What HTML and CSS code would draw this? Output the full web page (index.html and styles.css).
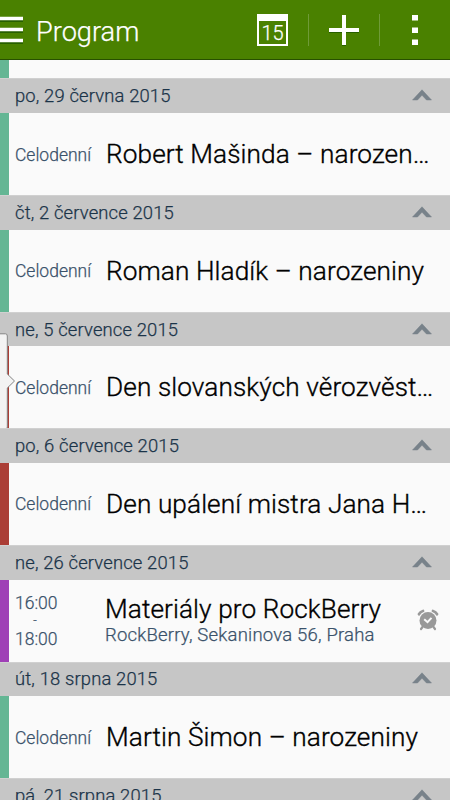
FILE: index.html
```html
<!DOCTYPE html>
<html lang="cs">
<head>
<meta charset="utf-8">
<title>Program</title>
<link rel="stylesheet" href="styles.css">
</head>
<body>
<svg class="defs" width="0" height="0"><symbol id="up" viewBox="0 0 20 12"><path d="M.5 11 10 .8 19.500 11h-5L10 6.200 5.500 11z" fill="#78828a" stroke="#78828a" stroke-width=".5"/></symbol></svg>
<main class="app">
<header class="bar">
  <svg class="menu" width="24" height="28" viewBox="0 0 24 28"><path d="M0 3h23M0 14h23M0 25h23" transform="translate(0 1)" stroke="#286000" stroke-width="4"/><path d="M0 2.500h23M0 13.500h23M0 24.500h23" stroke="#fff" stroke-width="3.500"/></svg>
  <h1 class="title">Program</h1>
  <div class="today"><span>15</span></div>
  <i class="divider"></i>
  <svg class="plus" width="32" height="32" viewBox="0 0 32 32"><path d="M1 17h30M16 2v30" stroke="#286000" stroke-width="4"/><path d="M1 16h30M16 1v30" stroke="#fff" stroke-width="4"/></svg>
  <i class="divider"></i>
  <svg class="more" width="8" height="32" viewBox="0 0 8 32"><path d="M1 1h6v5.500H1zM1 13.500h6V19H1zM1 25.500h6V31H1z" fill="#fff"/></svg>
</header>
<div class="sliver green"></div>
<section>
  <h2 class="date"><span>po, 29 června 2015</span><svg class="up"><use href="#up"/></svg></h2>
  <div class="event green"><span class="time">Celodenní</span><span class="name">Robert Mašinda – narozeniny</span></div>
</section>
<section>
  <h2 class="date"><span>čt, 2 července 2015</span><svg class="up"><use href="#up"/></svg></h2>
  <div class="event green"><span class="time">Celodenní</span><span class="name">Roman Hladík – narozeniny</span></div>
</section>
<section>
  <h2 class="date"><span>ne, 5 července 2015</span><svg class="up"><use href="#up"/></svg></h2>
  <div class="event red"><span class="time">Celodenní</span><span class="name">Den slovanských věrozvěstů Cyrila a Metoděje</span></div>
  <svg class="handle" width="16" height="98" viewBox="0 0 16 98"><path d="M-1 .8H5.500Q7.300 .8 7.300 3V41L14.500 48 7.300 55V94Q7.300 96.500 5 96.500H-1z" fill="#f3f3f3" stroke="#858585"/></svg>
</section>
<section>
  <h2 class="date"><span>po, 6 července 2015</span><svg class="up"><use href="#up"/></svg></h2>
  <div class="event red"><span class="time">Celodenní</span><span class="name">Den upálení mistra Jana Husa</span></div>
</section>
<section>
  <h2 class="date"><span>ne, 26 července 2015</span><svg class="up"><use href="#up"/></svg></h2>
  <div class="event purple">
    <div class="time range"><span>16:00</span><i>-</i><span>18:00</span></div>
    <div class="details"><span class="name">Materiály pro RockBerry</span><span class="place">RockBerry, Sekaninova 56, Praha</span></div>
    <svg class="alarm" width="22" height="22" viewBox="0 0 22 22"><g fill="none" stroke="#999" stroke-linecap="round"><path d="M2 5.200Q3.200 2.700 6 2M20 5.200Q18.800 2.700 16 2" stroke-width="2.800"/><path d="M5.500 18 4 20M16.500 18 18 20" stroke-width="2.200"/></g><circle cx="11" cy="11.500" r="8.500" fill="#999"/><path d="M7.200 10.200 10.500 13.200 14.500 8.800" fill="none" stroke="#fafafa" stroke-width="2"/></svg>
  </div>
</section>
<section>
  <h2 class="date"><span>út, 18 srpna 2015</span><svg class="up"><use href="#up"/></svg></h2>
  <div class="event green"><span class="time">Celodenní</span><span class="name">Martin Šimon – narozeniny</span></div>
</section>
<section>
  <h2 class="date"><span>pá, 21 srpna 2015</span><svg class="up"><use href="#up"/></svg></h2>
</section>
</main>
</body>
</html>
```
FILE: styles.css
```css
* { box-sizing: border-box; }
body { margin: 0; font-family: Roboto, sans-serif; font-weight: 300; background: #fafafa; -webkit-text-stroke: .25px; }
.defs { position: absolute; }
.app { width: 450px; height: 800px; overflow: hidden; }
.bar { display: flex; align-items: center; height: 60px; background: #4a8100; border-bottom: 1px solid #285000; color: #fff; }
.menu { margin-right: 12px; }
.title { margin: 4px 0 0; width: 221px; font-size: 27.200px; font-weight: 300; line-height: 34px; }
.today { width: 31px; height: 32px; border: 2px solid #fff; border-top-width: 7px; text-align: center; font-size: 20px; line-height: 24px; }
.divider { width: 1px; height: 32px; margin-left: 20px; background: #6f9b38; }
.plus { margin-left: 19px; }
.plus + .divider { margin-left: 19px; }
.more { margin-left: 31px; }
.sliver { height: 18.3px; }
section { position: relative; }
.date { display: flex; align-items: center; justify-content: space-between; height: 34.800px; margin: 0; padding: 0 18px 0 15px; border-top: 1px solid #d0d0d0; background: #c6c6c6; color: #1b3449; font-size: 18.400px; font-weight: 300; letter-spacing: .15px; line-height: 24px; }
.up { width: 20px; height: 12px; margin-top: -2px; }
.event { display: flex; align-items: center; height: 81.860px; padding: 0 16px 0 6px; }
.green { border-left: 9px solid #64b694; }
.red { border-left: 9px solid #ab3e36; }
.purple { border-left: 9px solid #9f3fb6; }
.time { flex: none; width: 91px; padding-top: 1px; color: #3a526a; font-size: 17.500px; }
.name { flex: 1; min-width: 0; white-space: nowrap; overflow: hidden; text-overflow: ellipsis; color: #000; font-size: 26.200px; line-height: 34px; letter-spacing: .1px; -webkit-text-stroke: .35px; }
.range { display: flex; flex-direction: column; width: 90px; padding: 0; line-height: 22px; }
.range i { width: 40px; font-size: 12px; line-height: 14px; text-align: center; font-style: normal; }
.details { flex: 1; display: flex; flex-direction: column; margin-top: -2px; }
.details .name { flex: none; line-height: 30px; }
.place { color: #3a526a; font-size: 18.500px; line-height: 22px; letter-spacing: .2px; white-space: nowrap; }
.alarm { flex: none; margin: -1px -5px 0 0; }
.handle { position: absolute; left: 0; top: 21px; }
```
